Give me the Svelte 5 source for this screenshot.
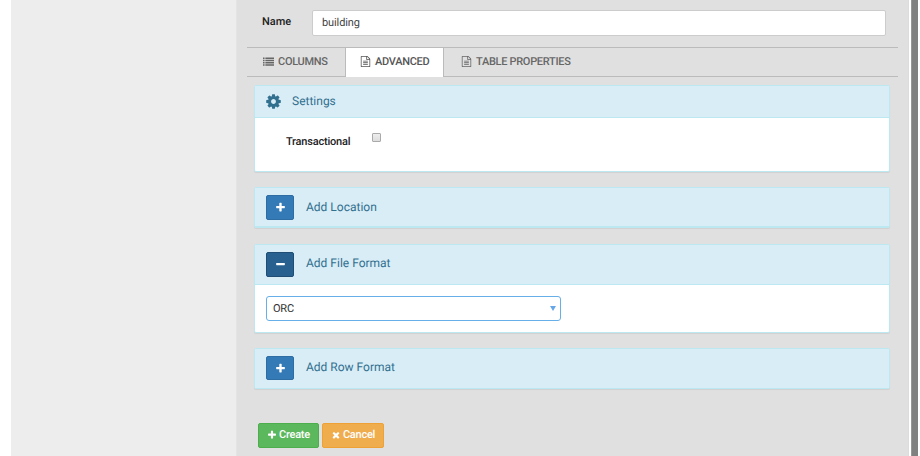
<script>
  const paths = {
    plus: 'M1600 736v192q0 40-28 68t-68 28h-416v416q0 40-28 68t-68 28h-192q-40 0-68-28t-28-68v-416h-416q-40 0-68-28t-28-68v-192q0-40 28-68t68-28h416v-416q0-40 28-68t68-28h192q40 0 68 28t28 68v416h416q40 0 68 28t28 68z',
    minus: 'M1600 736v192q0 40-28 68t-68 28h-1216q-40 0-68-28t-28-68v-192q0-40 28-68t68-28h1216q40 0 68 28t28 68z',
    times: 'M1490 1322q0 40-28 68l-136 136q-28 28-68 28t-68-28l-294-294-294 294q-28 28-68 28t-68-28l-136-136q-28-28-28-68t28-68l294-294-294-294q-28-28-28-68t28-68l136-136q28-28 68-28t68 28l294 294 294-294q28-28 68-28t68 28l136 136q28 28 28 68t-28 68l-294 294 294 294q28 28 28 68z',
    cog: 'M1152 896q0-106-75-181t-181-75-181 75-75 181 75 181 181 75 181-75 75-181zm512-109v222q0 12-8 23t-20 13l-185 28q-19 54-39 91 35 50 107 138 10 12 10 25t-9 23q-27 37-99 108t-94 71q-12 0-26-9l-138-108q-44 23-91 38-16 136-29 186-7 28-36 28h-222q-14 0-24.5-8.5t-11.5-21.5l-28-184q-49-16-90-37l-141 107q-10 9-25 9-14 0-25-11-126-114-165-168-7-10-7-23 0-12 8-23 15-21 51-66.5t54-70.5q-27-50-41-99l-183-27q-13-2-21-12.5t-8-23.5v-222q0-12 8-23t19-13l186-28q14-46 39-92-40-57-107-138-10-12-10-24 0-10 9-23 26-36 98.5-107.5t94.5-71.5q13 0 26 10l138 107q44-23 91-38 16-136 29-186 7-28 36-28h222q14 0 24.5 8.5t11.5 21.5l28 184q49 16 90 37l142-107q9-9 24-9 13 0 25 10 129 119 165 170 7 8 7 22 0 12-8 23-15 21-51 66.5t-54 70.5q26 50 41 98l183 28q13 2 21 12.5t8 23.5z',
    file: 'M1596 380q28 28 48 76t20 88v1152q0 40-28 68t-68 28h-1344q-40 0-68-28t-28-68v-1600q0-40 28-68t68-28h896q40 0 88 20t76 48zm-444-244v376h376q-10-29-22-41l-313-313q-12-12-41-22zm384 1528v-1024h-416q-40 0-68-28t-28-68v-416h-768v1536h1280zM512 768h768v128h-768zM512 1024h768v128h-768zM512 1280h768v128h-768z',
    list: 'M0 256h256v215h-256zM384 256h1408v215h-1408zM0 625h256v215h-256zM384 625h1408v215h-1408zM0 994h256v215h-256zM384 994h1408v215h-1408zM0 1363h256v215h-256zM384 1363h1408v215h-1408z'
  };
</script>

{#snippet icon(name, size)}
  <svg width={size} height={size} viewBox="0 0 1792 1792" aria-hidden="true"><path d={paths[name]} /></svg>
{/snippet}

<div class="page">
  <aside></aside>
  <main>
    <div class="name-row">
      <label for="table-name">Name</label>
      <input id="table-name" type="text" value="building" />
    </div>

    <nav>
      <div class="tab columns">{@render icon('list', 11)}<span>COLUMNS</span></div>
      <div class="tab active">{@render icon('file', 11)}<span>ADVANCED</span></div>
      <div class="tab properties">{@render icon('file', 11)}<span>TABLE PROPERTIES</span></div>
    </nav>

    <div class="panels">
      <section class="panel settings">
        <header>{@render icon('cog', 17)}<span>Settings</span></header>
        <div class="body"><span class="label">Transactional</span><span class="check"></span></div>
      </section>
      <section class="panel location">
        <header><button aria-label="Expand location">{@render icon('plus', 11)}</button><span>Add Location</span></header>
      </section>
      <section class="panel format">
        <header><button class="open" aria-label="Collapse file format">{@render icon('minus', 11)}</button><span>Add File Format</span></header>
        <div class="body"><div class="select"><span>ORC</span><i></i></div></div>
      </section>
      <section class="panel row-format">
        <header><button aria-label="Expand row format">{@render icon('plus', 11)}</button><span>Add Row Format</span></header>
      </section>
    </div>

    <footer>
      <button class="create">{@render icon('plus', 10)}<span>Create</span></button>
      <button class="cancel">{@render icon('times', 10)}<span>Cancel</span></button>
    </footer>
  </main>
  <div class="edge"></div>
</div>

<style>
  :global(body) { margin: 0; background: #fff; overflow: hidden; }
  .page, .page * { box-sizing: border-box; }
  .page { display: flex; width: 920px; height: 456px; padding-left: 11px; overflow: hidden; font: 11px Roboto, sans-serif; color: #333; text-rendering: geometricPrecision; }
  svg { display: block; flex: none; fill: currentColor; }
  aside { width: 226px; background: #ededed; border-right: 1px solid #e4e4e4; }
  main { width: 672px; padding: 10px 12px 0 10px; background: #e0e0e0; border-right: 1px solid #dcdcdc; }
  .edge { width: 7px; margin-left: 2px; background: #808080; border-left: 1px solid #969696; }
  .name-row { display: flex; height: 26px; padding-left: 15px; }
  .name-row label { width: 50px; line-height: 24px; font-weight: 500; color: #222; }
  .name-row input { width: 574px; height: 26px; padding: 0 9px 1px; border: 1px solid #ccc; border-radius: 2px; background: #fff; color: #444; font: 11px Roboto, sans-serif; letter-spacing: -.1px; outline: none; text-rendering: geometricPrecision; }
  nav { display: flex; width: 651px; height: 30px; margin-top: 11px; border-top: 1px solid #bbb; border-bottom: 1px solid #bbb; }
  .tab { display: flex; height: 28px; padding-bottom: 1px; align-items: center; gap: 4px; color: #666; font-weight: 500; letter-spacing: -.3px; white-space: nowrap; }
  .tab svg { margin-bottom: 1px; }
  .columns { width: 98px; padding-left: 16px; }
  .active { width: 99px; height: 29px; padding: 0 0 2px 14px; border: solid #bbb; border-width: 0 1px; background: #fff; color: #555; }
  .properties { padding-left: 17px; }
  .panels { display: flex; flex-direction: column; width: 636px; margin: 8px 0 0 7px; }
  .panel { border: 1px solid #bce8f1; border-radius: 2px; background: #fff; box-shadow: 0 1px 1px rgba(0, 0, 0, .07); }
  .panel header { display: flex; align-items: center; color: #31708f; background: #d9edf7; font-size: 12px; }
  .settings { height: 87px; margin-bottom: 15px; }
  .settings header { height: 32px; padding: 0 0 1px 10px; gap: 10px; border-bottom: 1px solid #bce8f1; }
  .settings .body { display: flex; padding: 15px 0 0 31px; }
  .label { width: 86px; font-weight: 500; line-height: 17px; letter-spacing: -.2px; color: #222; }
  .check { width: 9px; height: 9px; border: 1px solid #aaa; border-radius: 1px; background: linear-gradient(#eee, #ddd); }
  .location { height: 41px; margin-bottom: 16px; }
  .location header, .row-format header { height: 39px; }
  .location header { border-bottom: 1px solid #bce8f1; }
  .format { height: 89px; margin-bottom: 15px; }
  .format header { height: 40px; border-bottom: 1px solid #bce8f1; }
  .row-format { height: 41px; }
  .panel header:has(button) { padding-left: 11px; gap: 12px; }
  .panel header button { display: flex; width: 28px; height: 25px; padding: 0; align-items: center; justify-content: center; border: 1px solid #2e6da4; border-radius: 2px; background: #337ab7; color: #fff; }
  .panel header .open { background: #286090; border-color: #204d74; }
  .panel header:has(button) span { padding-bottom: 4px; }
  .panel.location header span { padding-bottom: 1px; }
  .row-format header { padding-bottom: 1px; }
  .row-format header button { height: 24px; }
  .panel.row-format header span { padding-bottom: 2px; }
  .format .body { padding: 11px; }
  .select { display: flex; width: 295px; height: 25px; padding: 0 4px 0 6px; align-items: center; justify-content: space-between; border: 1px solid #66afe9; border-radius: 3px; color: #333; letter-spacing: -.2px; }
  .select i { border: solid transparent; border-width: 5px 3px 0; border-top-color: #66a7e8; }
  footer { display: flex; gap: 3px; margin: 34px 0 0 11px; }
  footer button { display: flex; height: 25px; padding: 0 0 2px; align-items: center; justify-content: center; gap: 2px; border: 1px solid; border-radius: 2px; color: #fff; font: 500 11px Roboto, sans-serif; letter-spacing: -.25px; text-rendering: geometricPrecision; }
  .create { width: 61px; background: #5cb85c; border-color: #4cae4c; }
  .cancel { width: 62px; background: #f0ad4e; border-color: #eea236; }
</style>
